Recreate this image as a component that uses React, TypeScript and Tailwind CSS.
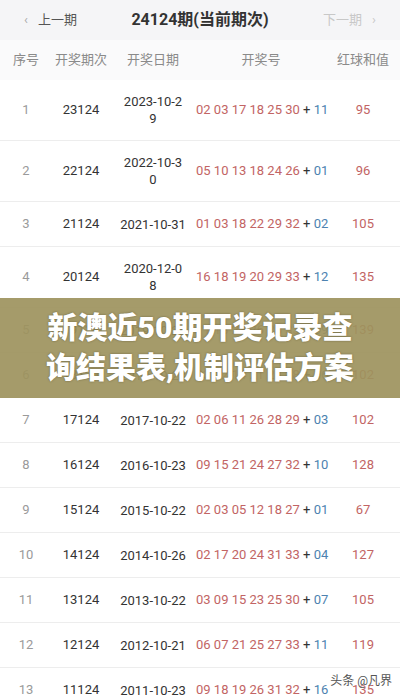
import React from "react";

type Row = {
  idx: number;
  issue: string;
  date: string[];
  reds: string[];
  blue: string;
  sum: number;
};

const rows: Row[] = [
  { idx: 1, issue: "23124", date: ["2023-10-2", "9"], reds: ["02", "03", "17", "18", "25", "30"], blue: "11", sum: 95 },
  { idx: 2, issue: "22124", date: ["2022-10-3", "0"], reds: ["05", "10", "13", "18", "24", "26"], blue: "01", sum: 96 },
  { idx: 3, issue: "21124", date: ["2021-10-31"], reds: ["01", "03", "18", "22", "29", "32"], blue: "02", sum: 105 },
  { idx: 4, issue: "20124", date: ["2020-12-0", "8"], reds: ["16", "18", "19", "20", "29", "33"], blue: "12", sum: 135 },
  { idx: 5, issue: "19124", date: ["2019-10-22"], reds: ["11", "18", "23", "26", "28", "33"], blue: "09", sum: 139 },
  { idx: 6, issue: "18124", date: ["2018-10-23"], reds: ["03", "12", "14", "21", "24", "28"], blue: "06", sum: 102 },
  { idx: 7, issue: "17124", date: ["2017-10-22"], reds: ["02", "06", "11", "26", "28", "29"], blue: "03", sum: 102 },
  { idx: 8, issue: "16124", date: ["2016-10-23"], reds: ["09", "15", "21", "24", "27", "32"], blue: "10", sum: 128 },
  { idx: 9, issue: "15124", date: ["2015-10-22"], reds: ["02", "03", "05", "12", "18", "27"], blue: "01", sum: 67 },
  { idx: 10, issue: "14124", date: ["2014-10-26"], reds: ["02", "17", "20", "24", "31", "33"], blue: "04", sum: 127 },
  { idx: 11, issue: "13124", date: ["2013-10-22"], reds: ["03", "09", "15", "23", "25", "30"], blue: "07", sum: 105 },
  { idx: 12, issue: "12124", date: ["2012-10-21"], reds: ["06", "07", "21", "25", "27", "33"], blue: "11", sum: 119 },
  { idx: 13, issue: "11124", date: ["2011-10-23"], reds: ["09", "18", "19", "26", "31", "32"], blue: "16", sum: 135 },
];

const grid = "grid grid-cols-[52px_58px_86px_130px_74px] items-center";

function DrawRow({ row }: { row: Row }) {
  const tall = row.date.length > 1;
  return (
    <div
      className={`${grid} border-b border-[#ededed] text-[13px] ${tall ? "h-[61px]" : "h-[45px]"}`}
    >
      <div className="text-center text-[#9a9a9a]">{row.idx}</div>
      <div className="text-center text-[#333]">{row.issue}</div>
      <div className="text-center text-[#333] leading-[17px]">
        {row.date.map((d, i) => (
          <div key={i}>{d}</div>
        ))}
      </div>
      <div className="whitespace-nowrap">
        <span className="text-[#c26464]">{row.reds.join(" ")}</span>
        <span className="text-[#333]"> + </span>
        <span className="text-[#4d82b0]">{row.blue}</span>
      </div>
      <div className="text-center text-[#c26464]">{row.sum}</div>
    </div>
  );
}

export default function App() {
  return (
    <div
      className="relative w-[400px] h-[698px] overflow-hidden bg-white"
      style={{ fontFamily: 'Roboto, "Noto Sans CJK SC", sans-serif' }}
    >
      <div className="flex h-[40px] items-center justify-between bg-[#f5f5f7] px-[24px]">
        <div className="flex items-center gap-[10px] text-[13px] text-[#555]">
          <span className="text-[#aaa]">‹</span>
          <span>上一期</span>
        </div>
        <div className="text-[16px] font-bold text-[#333]">24124期(当前期次)</div>
        <div className="flex items-center gap-[10px] text-[13px] text-[#c8c8c8]">
          <span>下一期</span>
          <span>›</span>
        </div>
      </div>

      <div className={`${grid} h-[40px] bg-[#fafafb] text-[13px] text-[#8a8a8a]`}>
        <div className="text-center">序号</div>
        <div className="text-center">开奖期次</div>
        <div className="text-center">开奖日期</div>
        <div className="text-center">开奖号</div>
        <div className="text-center">红球和值</div>
      </div>

      {rows.map((r) => (
        <DrawRow key={r.idx} row={r} />
      ))}

      <div className="absolute left-0 right-0 top-[298px] flex h-[100px] flex-col items-center justify-center bg-[#9d935d]/[0.92]">
        <div
          className="text-[30px] font-black leading-[40px] text-white"
          style={{ textShadow: "0 0 2px rgba(60,55,30,0.6)" }}
        >
          新澳近50期开奖记录查
        </div>
        <div
          className="text-[30px] font-black leading-[40px] text-white"
          style={{ textShadow: "0 0 2px rgba(60,55,30,0.6)" }}
        >
          询结果表,机制评估方案
        </div>
      </div>

      <div
        className="absolute bottom-[8px] right-[8px] text-[12px] text-[#555]"
        style={{ textShadow: "0 0 2px #fff" }}
      >
        头条 @凡界
      </div>
    </div>
  );
}
